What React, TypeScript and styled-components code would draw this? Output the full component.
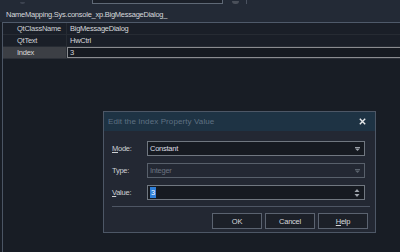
import styled, { createGlobalStyle } from "styled-components";

const GlobalStyle = createGlobalStyle`
  html, body {
    margin: 0;
    padding: 0;
    background: #181d25;
  }
  body {
    font-family: "Liberation Sans", Arial, sans-serif;
    font-size: 7.5px;
    letter-spacing: -0.25px;
    color: #d2d4d8;
  }
`;

const Page = styled.div`
  position: relative;
  width: 400px;
  height: 252px;
  display: flex;
  flex-direction: column;
  overflow: hidden;
  background: #181d25;
`;

const Header = styled.div`
  height: 22px;
  background: #232a36;
  display: flex;
  flex-direction: column;
`;

const Toolbar = styled.div`
  height: 4px;
  display: flex;
  align-items: flex-end;
  padding-left: 20px;
`;

const ToolStub = styled.div`
  width: 5px;
  height: 2px;
  background: #3c4350;
  border-radius: 0 0 2px 2px;
`;

const SearchBox = styled.div`
  width: 131px;
  height: 4px;
  margin-left: 67px;
  border: 1px solid #5f6976;
  border-top: none;
  box-sizing: border-box;
  background: #1b2029;
`;

const ToolKnob = styled.div`
  width: 7px;
  height: 3px;
  margin-left: 9px;
  border-radius: 0 0 4px 4px;
  background: #4a505a;
`;

const ToolDivider = styled.div`
  width: 1px;
  height: 4px;
  margin-left: 7px;
  background: #4a5260;
`;

const PathLabel = styled.div`
  padding: 6px 0 0 6px;
  line-height: 10px;
  color: #d6d8dc;
  white-space: nowrap;
`;

const GridArea = styled.div`
  flex: 1;
  margin-left: 2px;
  border-left: 1px solid #4b5564;
  border-top: 1px solid #4f5a6a;
  display: flex;
  flex-direction: column;
`;

const Row = styled.div<{ $last?: boolean }>`
  display: flex;
  height: 11px;
  border-bottom: 1px solid ${(p) => (p.$last ? "#2c3038" : "#262b33")};
  background: #1a1f28;
`;

const NameCell = styled.div<{ $selected?: boolean }>`
  width: 64px;
  padding-left: 14px;
  box-sizing: border-box;
  line-height: 11px;
  background: ${(p) => (p.$selected ? "#3c3f45" : "transparent")};
  color: ${(p) => (p.$selected ? "#d8d8d8" : "#cfd2d6")};
  border-right: 1px solid #262b33;
`;

const ValueCell = styled.div<{ $editing?: boolean }>`
  flex: 1;
  padding-left: ${(p) => (p.$editing ? "2px" : "3px")};
  line-height: ${(p) => (p.$editing ? "9px" : "11px")};
  box-sizing: border-box;
  color: #d6d8dc;
  ${(p) =>
    p.$editing &&
    `
    border-top: 1px solid #8a8c90;
    border-bottom: 1px solid #8a8c90;
    border-left: 1px solid #8a8c90;
    background: #161a21;
  `}
`;

const Empty = styled.div`
  flex: 1;
`;

const Dialog = styled.div`
  position: absolute;
  left: 103px;
  top: 111px;
  width: 273px;
  height: 122px;
  box-sizing: border-box;
  border: 1px solid #4d5766;
  background: #232833;
  display: flex;
  flex-direction: column;
`;

const TitleBar = styled.div`
  height: 19px;
  background: #1e3344;
  display: flex;
  align-items: center;
  justify-content: space-between;
  padding: 0 9px 0 4px;
`;

const Title = styled.span`
  color: #5f7183;
  font-size: 8px;
  letter-spacing: 0.1px;
`;

const Body = styled.div`
  flex: 1;
  display: flex;
  flex-direction: column;
  padding: 10px 7px 0 8px;
`;

const Field = styled.div`
  display: flex;
  align-items: center;
  height: 15px;
  margin-bottom: 7px;
`;

const FieldLabel = styled.label`
  width: 35px;
  color: #cdd0d4;
  u {
    text-decoration: underline;
    text-underline-offset: 1px;
  }
`;

const Box = styled.div<{ $disabled?: boolean }>`
  width: 218px;
  height: 15px;
  box-sizing: border-box;
  border: 1px solid ${(p) => (p.$disabled ? "#58606b" : "#707780")};
  background: ${(p) => (p.$disabled ? "#232833" : "#161a21")};
  display: flex;
  align-items: center;
  justify-content: space-between;
  padding: 0 4px 0 2px;
  color: ${(p) => (p.$disabled ? "#6b7380" : "#dcdee2")};
`;

const Selected = styled.span`
  background: #2f7fd8;
  color: #ffffff;
  padding: 0 1px;
  line-height: 11px;
`;

const Separator = styled.div`
  height: 1px;
  background: #4e5664;
  margin: -1px 0 6px 0;
  width: 258px;
`;

const Buttons = styled.div`
  display: flex;
  justify-content: flex-end;
  gap: 3px;
`;

const Button = styled.button`
  width: 50px;
  height: 16px;
  box-sizing: border-box;
  border: 1px solid #5b6370;
  background: #1c2028;
  color: #d6d8dc;
  font-family: "Liberation Sans", Arial, sans-serif;
  font-size: 7.5px;
  letter-spacing: -0.25px;
  padding: 0;
  u {
    text-underline-offset: 1px;
  }
`;

const Arrow = ({ dim }: { dim?: boolean }) => (
  <svg width="5" height="4" viewBox="0 0 5 4">
    <rect x="0" y="0" width="5" height="1" fill={dim ? "#5a626d" : "#9aa0a8"} />
    <path d="M0 1.5 H5 L2.5 4 Z" fill={dim ? "#5a626d" : "#9aa0a8"} />
  </svg>
);

const Spin = () => (
  <svg width="6" height="10" viewBox="0 0 6 10">
    <path d="M0.5 4 L3 1 L5.5 4 Z" fill="#a0a6ae" />
    <path d="M0.5 6 H5.5 L3 9 Z" fill="#a0a6ae" />
  </svg>
);

const CloseIcon = () => (
  <svg width="7" height="7" viewBox="0 0 7 7">
    <path d="M0.8 0.8 L6.2 6.2 M6.2 0.8 L0.8 6.2" stroke="#e6e8ea" strokeWidth="1.4" />
  </svg>
);

export default function App() {
  return (
    <>
      <GlobalStyle />
      <Page>
        <Header>
          <Toolbar>
            <ToolStub />
            <SearchBox />
            <ToolKnob />
            <ToolDivider />
          </Toolbar>
          <PathLabel>NameMapping.Sys.console_xp.BigMessageDialog_</PathLabel>
        </Header>
        <GridArea>
          <Row>
            <NameCell>QtClassName</NameCell>
            <ValueCell>BigMessageDialog</ValueCell>
          </Row>
          <Row>
            <NameCell>QtText</NameCell>
            <ValueCell>HwCtrl</ValueCell>
          </Row>
          <Row $last>
            <NameCell $selected>Index</NameCell>
            <ValueCell $editing>3</ValueCell>
          </Row>
          <Empty />
        </GridArea>
        <Dialog>
          <TitleBar>
            <Title>Edit the Index Property Value</Title>
            <CloseIcon />
          </TitleBar>
          <Body>
            <Field>
              <FieldLabel>
                <u>M</u>ode:
              </FieldLabel>
              <Box>
                <span>Constant</span>
                <Arrow />
              </Box>
            </Field>
            <Field>
              <FieldLabel>Type:</FieldLabel>
              <Box $disabled>
                <span>Integer</span>
                <Arrow dim />
              </Box>
            </Field>
            <Field>
              <FieldLabel>
                <u>V</u>alue:
              </FieldLabel>
              <Box>
                <Selected>3</Selected>
                <Spin />
              </Box>
            </Field>
            <Separator />
            <Buttons>
              <Button>OK</Button>
              <Button>Cancel</Button>
              <Button>
                <u>H</u>elp
              </Button>
            </Buttons>
          </Body>
        </Dialog>
      </Page>
    </>
  );
}
